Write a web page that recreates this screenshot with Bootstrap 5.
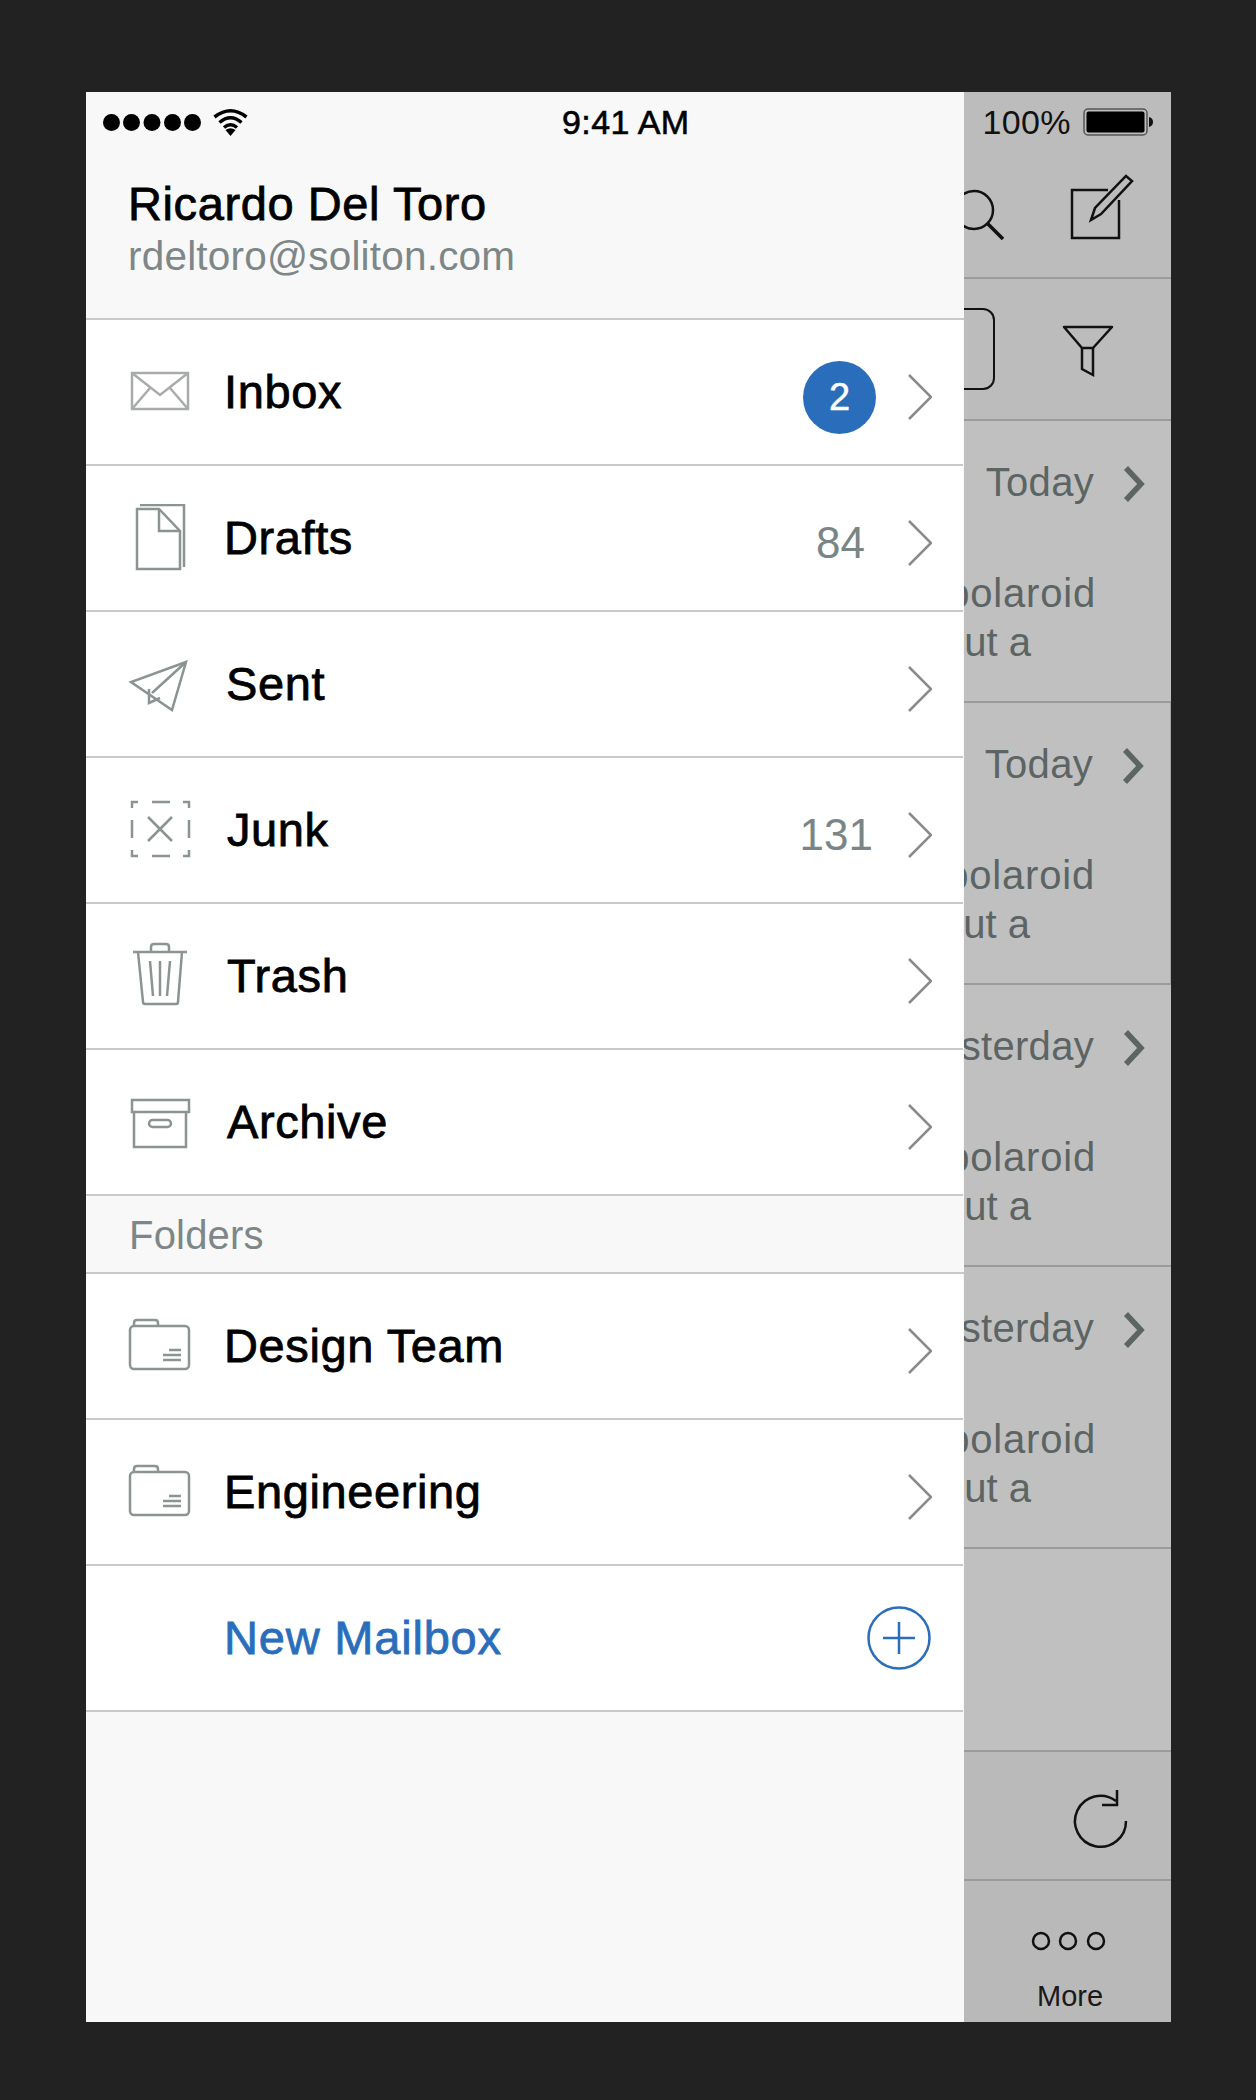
<!DOCTYPE html>
<html lang="en">
  <head>
    <meta charset="UTF-8" />
    <title>Mailboxes</title>
    <link href="https://cdn.jsdelivr.net/npm/bootstrap@5.3.0/dist/css/bootstrap.min.css" rel="stylesheet" />
    <style>
      body {
        background: #222;
        font-family: "Liberation Sans", Arial, sans-serif;
        color: #000;
      }
      .phone {
        width: 1085px;
        height: 1930px;
        margin: 92px 0 0 86px;
      }
      /* Drawer */
      .drawer {
        width: 878px;
        background: #f8f8f8;
      }
      .status-row {
        height: 60px;
        font-size: 34px;
        line-height: 60px;
        letter-spacing: 0.4px;
        -webkit-text-stroke: 0.6px;
      }
      .drawer .status-row {
        padding-left: 17px;
      }
      .status-dots {
        width: 98px;
        height: 17px;
      }
      .status-wifi {
        margin-left: 12px;
      }
      .status-time {
        margin-left: 314px;
      }
      .account {
        height: 168px;
        padding: 27px 0 0 42px;
        border-bottom: 2px solid #c9c9c9;
      }
      .account-name {
        font-size: 47px;
        line-height: 50px;
        letter-spacing: 0.6px;
        -webkit-text-stroke: 0.8px;
      }
      .account-mail {
        font-size: 40.5px;
        line-height: 50px;
        letter-spacing: 0.2px;
        margin-top: 2px;
        color: #7d8787;
      }
      .list-group-flush > .box-row {
        height: 146px;
        margin-right: 1px;
        padding: 0 31px 0 42px;
        background: #fff;
        border: 0;
        border-bottom: 2px solid #c9c9c9;
        border-radius: 0;
        font-size: 47px;
        color: #000;
      }
      .list-group-flush > .list-group-item.box-row:last-child {
        border-bottom-width: 2px;
      }
      .box-icon {
        width: 64px;
        height: 68px;
        flex: none;
        fill: none;
        stroke: #8b9393;
        stroke-width: 2.5;
      }
      .box-icon.pale {
        stroke: #a9abab;
      }
      .box-label {
        margin-left: 32px;
        letter-spacing: 0.6px;
        -webkit-text-stroke: 0.8px;
      }
      .box-label.in-3 {
        margin-left: 34px;
      }
      .box-label.in-4 {
        margin-left: 35px;
      }
      .box-count {
        font-size: 44px;
        color: #7b8585;
        margin-top: 10px;
        margin-right: 43px;
      }
      .box-count.wide {
        margin-right: 35px;
      }
      .box-badge {
        width: 73px;
        height: 73px;
        margin-top: 10px;
        margin-right: 32px;
        background: #2a6ebb;
        color: #fff;
        font-size: 38px;
        -webkit-text-stroke: 0.5px;
      }
      .box-chevron {
        width: 24px;
        height: 46px;
        flex: none;
        margin-top: 10px;
        fill: none;
        stroke: #8a8a8a;
        stroke-width: 2.5;
      }
      .folders-head {
        height: 78px;
        padding: 2px 0 0 43px;
        border-bottom: 2px solid #c9c9c9;
        font-size: 40px;
        letter-spacing: 0.2px;
        color: #7d8787;
      }
      .box-label.add-link {
        margin-left: 96px;
        letter-spacing: 0.8px;
        color: #2a6ebb;
      }
      .add-icon {
        width: 64px;
        height: 64px;
        margin-right: 1px;
        fill: none;
        stroke: #2a6ebb;
        stroke-width: 2.5;
      }
      /* Mail list behind the drawer */
      .mail-side {
        width: 207px;
        overflow: hidden;
        background: #c0c0c0;
        color: #5c6464;
        font-size: 40px;
      }
      .mail-side .status-row {
        background: #bcbcbc;
        color: #111;
        padding-right: 18px;
        -webkit-text-stroke: 0;
      }
      .battery {
        margin-left: 12px;
      }
      .mail-tools {
        height: 127px;
        padding-top: 22px;
        background: #bcbcbc;
        border-bottom: 2px solid #9b9b9b;
      }
      .tool-icon {
        flex: none;
        fill: none;
        stroke: #111;
        stroke-width: 2.5;
      }
      .search-tool {
        width: 56px;
        height: 68px;
        margin-left: -10px;
      }
      .compose-tool {
        width: 70px;
        height: 68px;
        margin-left: 56px;
      }
      .mail-filter {
        height: 142px;
        padding-top: 29px;
        background: #bcbcbc;
        border-bottom: 2px solid #9b9b9b;
      }
      .filter-field {
        width: 31px;
        height: 82px;
        border: 2.5px solid #111;
        border-left: 0;
        border-radius: 0 12px 12px 0;
      }
      .filter-tool {
        width: 56px;
        height: 58px;
        margin: 14px 0 0 65px;
      }
      .mail-item {
        height: 282px;
        padding-top: 36px;
        border-bottom: 2px solid #9b9b9b;
        white-space: nowrap;
      }
      .mail-item.shift {
        border-right: 1px solid #a4a4a4;
      }
      .mail-when {
        line-height: 50px;
        padding-right: 26px;
        letter-spacing: 0.3px;
      }
      .mail-chevron {
        width: 22px;
        height: 38px;
        flex: none;
        margin: 8px 0 0 29px;
        fill: none;
        stroke: #5c6464;
        stroke-width: 5.5;
      }
      .mail-line {
        line-height: 49px;
        padding-right: 75px;
        letter-spacing: 0.8px;
      }
      .mail-line.first {
        margin-top: 62px;
      }
      .mail-line.second {
        padding-right: 140px;
        letter-spacing: 0;
      }
      .mail-gap {
        height: 201px;
      }
      .mail-refresh {
        height: 129px;
        padding-top: 36px;
        background: #bababa;
        border-top: 2px solid #9b9b9b;
      }
      .refresh-tool {
        width: 64px;
        height: 64px;
        margin-left: 104px;
      }
      .mail-more {
        height: 143px;
        padding-top: 48px;
        background: #b9b9b9;
        border-top: 2px solid #9b9b9b;
        color: #1a1a1a;
        font-size: 29px;
      }
      .more-tool {
        width: 80px;
        height: 24px;
        margin-left: 65px;
      }
      .more-label {
        margin: 23px 0 0 73px;
        line-height: 40px;
      }
    </style>
  </head>
  <body>
    <svg class="d-none">
      <symbol id="chevron" viewBox="0 0 24 46"><path d="M1 1 L23 23 L1 45" /></symbol>
      <symbol id="bold-chevron" viewBox="0 0 22 38"><path d="M3 3 L18 19 L3 35" /></symbol>
      <symbol id="folder" viewBox="0 0 64 68">
        <path d="M6 14 V11 Q6 8 9 8 H27 Q30 8 30 11 V14" />
        <rect x="2" y="14" width="59" height="43" rx="4" />
        <path d="M41 38 H53 M35 43 H53 M35 48 H53" />
      </symbol>
    </svg>

    <div class="phone d-flex">
      <div class="drawer">
        <div class="status-row d-flex align-items-center">
          <svg class="status-dots" viewBox="0 0 98 17">
            <circle cx="8.5" cy="8.5" r="8.5" /><circle cx="28.5" cy="8.5" r="8.5" /><circle cx="49" cy="8.5" r="8.5" />
            <circle cx="69.5" cy="8.5" r="8.5" /><circle cx="89.5" cy="8.5" r="8.5" />
          </svg>
          <svg class="status-wifi" width="35" height="28" viewBox="0 0 35 28" fill="none" stroke="#000" stroke-width="3.5">
            <path d="M1.5 9 Q17.5 -3.5 33.5 9" /><path d="M6.5 14.5 Q17.5 5 28.5 14.5" /><path d="M11 19.5 Q17.5 14 24 19.5" />
            <path d="M12.5 22 L17.5 28 L22.5 22 Q17.5 18.5 12.5 22 Z" fill="#000" stroke="none" />
          </svg>
          <span class="status-time">9:41 AM</span>
        </div>
        <div class="account">
          <div class="account-name">Ricardo Del Toro</div>
          <div class="account-mail">rdeltoro@soliton.com</div>
        </div>

        <div class="list-group list-group-flush">
          <a class="list-group-item box-row d-flex align-items-center" href="#">
            <svg class="box-icon pale" viewBox="0 0 64 68">
              <rect x="4" y="15" width="56" height="36" />
              <path d="M4 15 L32 37 L60 15 M4 51 L22 30 M60 51 L42 30" />
            </svg>
            <span class="box-label">Inbox</span>
            <span class="box-badge ms-auto rounded-circle d-flex align-items-center justify-content-center">2</span>
            <svg class="box-chevron"><use href="#chevron" /></svg>
          </a>
          <a class="list-group-item box-row d-flex align-items-center" href="#">
            <svg class="box-icon" viewBox="0 0 64 68">
              <path d="M12 1 H56 V63" />
              <path d="M31 5 H9 V65 H52 V27 Z" fill="#fff" />
              <path d="M31 5 V27 H52" />
            </svg>
            <span class="box-label">Drafts</span>
            <span class="box-count ms-auto">84</span>
            <svg class="box-chevron"><use href="#chevron" /></svg>
          </a>
          <a class="list-group-item box-row d-flex align-items-center" href="#">
            <svg class="box-icon" viewBox="0 0 64 68">
              <path d="M58 12 L3 32 L44 60 Z" />
              <path d="M58 12 L24 43 M21 39 V53 L32 48" />
            </svg>
            <span class="box-label in-3">Sent</span>
            <svg class="box-chevron ms-auto"><use href="#chevron" /></svg>
          </a>
          <a class="list-group-item box-row d-flex align-items-center" href="#">
            <svg class="box-icon" viewBox="0 0 64 68">
              <path d="M4 12 V6 H10 M24 6 H42 M55 6 H61 V12 M61 24 V42 M61 54 V60 H55 M42 60 H24 M10 60 H4 V54 M4 42 V24" />
              <path d="M20 21 L44 45 M44 21 L20 45" />
            </svg>
            <span class="box-label in-4">Junk</span>
            <span class="box-count wide ms-auto">131</span>
            <svg class="box-chevron"><use href="#chevron" /></svg>
          </a>
          <a class="list-group-item box-row d-flex align-items-center" href="#">
            <svg class="box-icon" viewBox="0 0 64 68">
              <path d="M5 10 H59 M23 10 V5 Q23 2 26 2 H38 Q41 2 41 5 V10" />
              <path d="M10 10 L15 60 Q15 62 17 62 H48 Q50 62 50 60 L54 10" />
              <path d="M32 19 V54 M22 19 L25 54 M42 19 L39 54" />
            </svg>
            <span class="box-label in-4">Trash</span>
            <svg class="box-chevron ms-auto"><use href="#chevron" /></svg>
          </a>
          <a class="list-group-item box-row d-flex align-items-center" href="#">
            <svg class="box-icon" viewBox="0 0 64 68">
              <rect x="4" y="12" width="57" height="12" />
              <path d="M6 24 V59 H58 V24" />
              <rect x="21" y="32" width="22" height="7" rx="3.5" />
            </svg>
            <span class="box-label in-4">Archive</span>
            <svg class="box-chevron ms-auto"><use href="#chevron" /></svg>
          </a>
        </div>

        <div class="folders-head d-flex align-items-center">Folders</div>

        <div class="list-group list-group-flush">
          <a class="list-group-item box-row d-flex align-items-center" href="#">
            <svg class="box-icon"><use href="#folder" /></svg>
            <span class="box-label">Design Team</span>
            <svg class="box-chevron ms-auto"><use href="#chevron" /></svg>
          </a>
          <a class="list-group-item box-row d-flex align-items-center" href="#">
            <svg class="box-icon"><use href="#folder" /></svg>
            <span class="box-label">Engineering</span>
            <svg class="box-chevron ms-auto"><use href="#chevron" /></svg>
          </a>
          <a class="list-group-item box-row d-flex align-items-center" href="#">
            <span class="box-label add-link">New Mailbox</span>
            <svg class="add-icon ms-auto" viewBox="0 0 64 64">
              <circle cx="32" cy="32" r="30.5" />
              <path d="M16 32 H48 M32 16 V48" />
            </svg>
          </a>
        </div>
      </div>

      <div class="mail-side">
        <div class="status-row d-flex align-items-center justify-content-end">
          <span>100%</span>
          <svg class="battery" width="70" height="28" viewBox="0 0 70 28">
            <rect x="1" y="1" width="63" height="26" rx="4" fill="none" stroke="#555" stroke-width="1.5" />
            <rect x="3.5" y="3.5" width="58" height="21" rx="2" fill="#000" />
            <path d="M66 9 Q70 10 70 14 Q70 18 66 19 Z" fill="#111" />
          </svg>
        </div>
        <div class="mail-tools d-flex">
          <svg class="tool-icon search-tool" viewBox="0 0 56 68">
            <circle cx="20" cy="36" r="19" />
            <path d="M33 49 L49 65" stroke-width="3.5" />
          </svg>
          <svg class="tool-icon compose-tool" viewBox="0 0 70 68">
            <path d="M42 16 H6 V64 H53 V26" />
            <path d="M25 46 L29 34 L60 2 L66 7 L35 40 Z" />
          </svg>
        </div>
        <div class="mail-filter d-flex">
          <div class="filter-field"></div>
          <svg class="tool-icon filter-tool" viewBox="0 0 56 58">
            <path d="M4 5 H52 L33 26 H22 Z" stroke-linejoin="round" />
            <path d="M22 26 V47 L33 53 V26" />
          </svg>
        </div>

        <div class="mail-item">
          <div class="mail-when d-flex justify-content-end">Today<svg class="mail-chevron"><use href="#bold-chevron" /></svg></div>
          <div class="mail-line first d-flex justify-content-end">polaroid</div>
          <div class="mail-line second d-flex justify-content-end">but a</div>
        </div>
        <div class="mail-item shift">
          <div class="mail-when d-flex justify-content-end">Today<svg class="mail-chevron"><use href="#bold-chevron" /></svg></div>
          <div class="mail-line first d-flex justify-content-end">polaroid</div>
          <div class="mail-line second d-flex justify-content-end">but a</div>
        </div>
        <div class="mail-item">
          <div class="mail-when d-flex justify-content-end">Yesterday<svg class="mail-chevron"><use href="#bold-chevron" /></svg></div>
          <div class="mail-line first d-flex justify-content-end">polaroid</div>
          <div class="mail-line second d-flex justify-content-end">but a</div>
        </div>
        <div class="mail-item">
          <div class="mail-when d-flex justify-content-end">Yesterday<svg class="mail-chevron"><use href="#bold-chevron" /></svg></div>
          <div class="mail-line first d-flex justify-content-end">polaroid</div>
          <div class="mail-line second d-flex justify-content-end">but a</div>
        </div>

        <div class="mail-gap"></div>
        <div class="mail-refresh">
          <svg class="tool-icon refresh-tool" viewBox="0 0 64 64">
            <path d="M58 32 A25.5 25.5 0 1 1 48 12" />
            <path d="M49 1 V16 H34" />
          </svg>
        </div>
        <div class="mail-more">
          <svg class="tool-icon more-tool d-block" viewBox="0 0 80 24" stroke-width="4">
            <circle cx="12" cy="12" r="8" /><circle cx="39" cy="12" r="8" /><circle cx="67" cy="12" r="8" />
          </svg>
          <div class="more-label">More</div>
        </div>
      </div>
    </div>

    <script src="https://cdn.jsdelivr.net/npm/bootstrap@5.3.0/dist/js/bootstrap.bundle.min.js"></script>
  </body>
</html>
